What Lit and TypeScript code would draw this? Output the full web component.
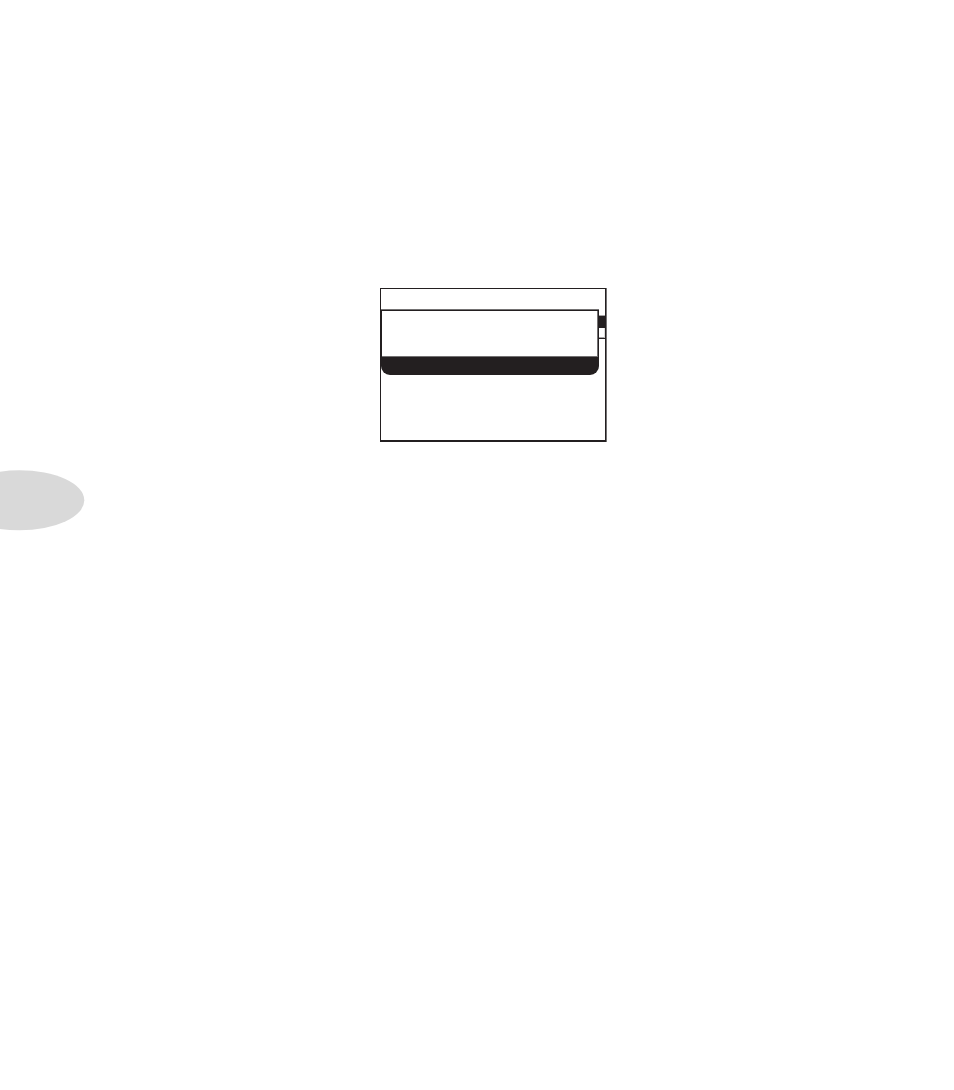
import { LitElement, html, css } from "lit";
import { customElement } from "lit/decorators.js";

@customElement("lcd-screen")
class LcdScreen extends LitElement {
  static styles = css`
    :host {
      --ink: #231f20;
      --soft: #737172;
      --paper: #ffffff;
      display: block;
      box-sizing: border-box;
      border-right: 1px solid var(--soft);
    }
    .frame {
      box-sizing: border-box;
      display: flex;
      align-items: flex-start;
      min-height: 154px;
      padding-top: 20px;
      border: 1px solid var(--ink);
      border-bottom-width: 2px;
      background: var(--paper);
    }
    .panel {
      flex: 1;
      box-sizing: border-box;
      border-top: 1px solid var(--soft);
      border-radius: 0 0 9px 9px;
      overflow: hidden;
      background: var(--ink);
    }
    .body {
      height: 45px;
      margin: 1px 1px 0;
      border-right: 1px solid var(--soft);
      border-bottom: 1px solid var(--soft);
      background: var(--paper);
    }
    .footer {
      height: 18px;
    }
    .scroll {
      width: 6px;
      padding-top: 6px;
    }
    .thumb {
      height: 12px;
      border-top: 1px solid #a5a3a4;
      background: var(--ink);
    }
    .track {
      height: 9px;
      border-right: 1px solid #dddddd;
      border-bottom: 1px solid #a5a3a4;
    }
    .end {
      height: 1px;
      background: var(--ink);
    }
  `;

  render() {
    return html`
      <div class="frame">
        <div class="panel">
          <div class="body"></div>
          <div class="footer"></div>
        </div>
        <div class="scroll">
          <div class="thumb"></div>
          <div class="track"></div>
          <div class="end"></div>
        </div>
      </div>
    `;
  }
}

@customElement("app-root")
class AppRoot extends LitElement {
  static styles = css`
    :host {
      display: block;
      min-height: 100vh;
      background: #ffffff;
    }
    .page {
      display: grid;
      grid-template-columns: 380px minmax(0, 227px);
      row-gap: 28px;
      padding-top: 288px;
    }
    .screen {
      grid-column: 2;
    }
    .tab {
      grid-column: 1;
      display: block;
      width: 85px;
      height: 61px;
      fill: #d9d9d9;
    }
  `;

  render() {
    return html`
      <main class="page">
        <lcd-screen class="screen"></lcd-screen>
        <svg class="tab" viewBox="0 0 85 61" aria-hidden="true">
          <ellipse cx="19.5" cy="30.3" rx="64.8" ry="30" />
        </svg>
      </main>
    `;
  }
}
